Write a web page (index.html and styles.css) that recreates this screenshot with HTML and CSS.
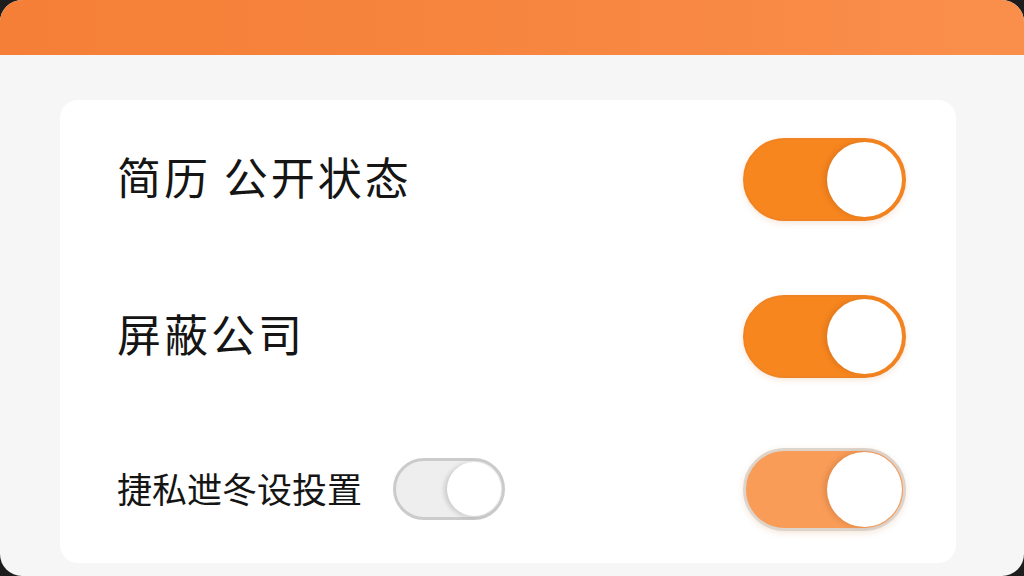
FILE: index.html
```html
<!DOCTYPE html>
<html lang="zh-CN">
<head>
<meta charset="utf-8">
<title>设置</title>
<link rel="stylesheet" href="styles.css">
</head>
<body>
<div class="frame">
  <div class="header"></div>
  <div class="content">
    <div class="card">
      <div class="row">
        <span class="label">简历 公开状态</span>
        <span class="toggle on"><span class="knob"></span></span>
      </div>
      <div class="row">
        <span class="label">屏蔽公司</span>
        <span class="toggle on"><span class="knob"></span></span>
      </div>
      <div class="row">
        <div class="left">
          <span class="label small">捷私迣冬设投置</span>
          <span class="mini"><span class="mini-knob"></span></span>
        </div>
        <span class="toggle on light"><span class="knob"></span></span>
      </div>
    </div>
  </div>
</div>
</body>
</html>
```
FILE: styles.css
```css
html, body {
  margin: 0;
  padding: 0;
  background: #1d1d1d;
}
.frame {
  width: 1024px;
  height: 576px;
  border-radius: 22px;
  overflow: hidden;
  background: #f6f6f6;
  display: flex;
  flex-direction: column;
}
.header {
  height: 55px;
  flex: none;
  background: linear-gradient(90deg, #f57f36 0%, #f78640 55%, #fa8f4c 100%);
}
.content {
  flex: 1;
  padding: 45px 68px 13px 60px;
  display: flex;
}
.card {
  flex: 1;
  background: #ffffff;
  border-radius: 18px;
  padding: 37px 50px 0 57px;
  display: flex;
  flex-direction: column;
  gap: 73px;
}
.row {
  height: 84px;
  display: flex;
  align-items: center;
  justify-content: space-between;
}
.row:last-child {
  margin-top: -4px;
}
.label {
  font-family: "Noto Sans CJK SC", "Noto Sans", sans-serif;
  font-size: 44px;
  font-weight: 400;
  letter-spacing: 3px;
  color: #151515;
  line-height: 1;
  margin-top: -7px;
}
.label.small {
  font-size: 35px;
  letter-spacing: 0;
  margin-top: -4px;
}
.left {
  display: flex;
  align-items: center;
  gap: 31px;
}
.toggle {
  position: relative;
  width: 163px;
  height: 83px;
  box-sizing: border-box;
  border-radius: 42px;
  background: #f7861f;
  border: 2px solid #f08323;
  box-shadow: 0 2px 6px rgba(200, 110, 40, 0.18);
}
.toggle.light {
  background: #f89c58;
  border: 3px solid #ddd4cc;
}
.knob {
  position: absolute;
  right: 2px;
  top: 2px;
  width: 75px;
  height: 75px;
  border-radius: 50%;
  background: #ffffff;
  box-shadow: -3px 0 5px rgba(150, 70, 10, 0.22);
}
.toggle.light .knob {
  right: 1px;
  top: 1px;
}
.mini {
  position: relative;
  width: 112px;
  height: 62px;
  box-sizing: border-box;
  border-radius: 31px;
  background: #eeeeee;
  border: 3px solid #cbcbcb;
}
.mini-knob {
  position: absolute;
  right: 1px;
  top: 1px;
  width: 54px;
  height: 54px;
  border-radius: 50%;
  background: #ffffff;
  box-shadow: -3px 1px 4px rgba(0, 0, 0, 0.14);
}
```
